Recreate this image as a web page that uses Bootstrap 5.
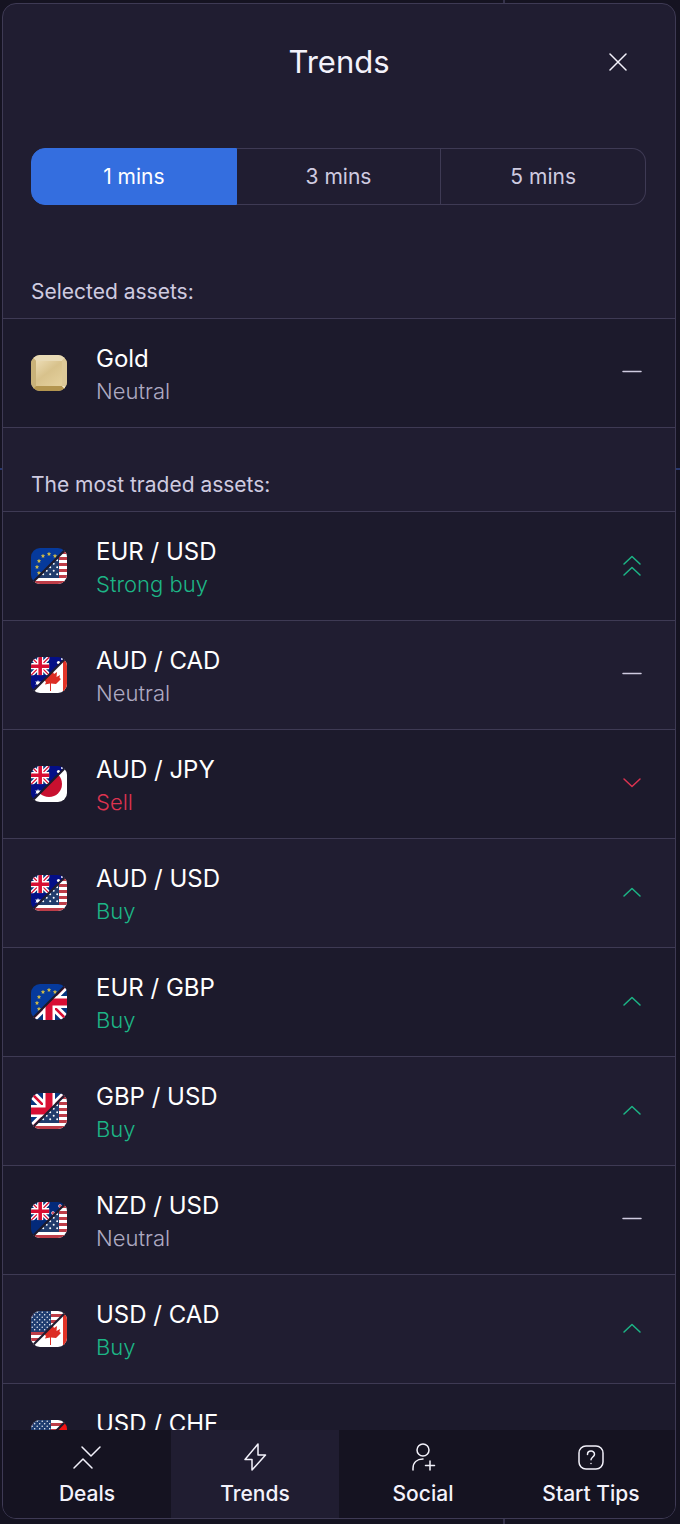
<!DOCTYPE html>
<html lang="en">
<head>
<meta charset="utf-8">
<meta name="viewport" content="width=device-width, initial-scale=1">
<title>Trends</title>
<link href="https://cdn.jsdelivr.net/npm/bootstrap@5.3.0/dist/css/bootstrap.min.css" rel="stylesheet">
<style>
  :root { --line: #3e3a54; --panel: #201d31; --row: #1c1a2c; --text: #f3f2fb; --soft: #cfcbe0; --mute: #aeaac2; --up: #1cb586; --down: #dc3350; }
  body { background: linear-gradient(#35324a, #35324a) 503px 0 / 2px 100% no-repeat, linear-gradient(#28386e, #28386e) 0 468px / 100% 2px no-repeat, #151321; font-family: Inter, "Liberation Sans", sans-serif; color: var(--text); }
  .shell { height: 100vh; padding: 3px 4px 5px 2px; }
  .panel { background: var(--panel); border: 1px solid var(--line); border-radius: 14px; }
  .title-bar { padding: 38px 48px 66px; }
  .title-bar h1 { font-size: 31px; line-height: 40px; font-weight: 400; grid-area: 1 / 1; }
  .close-btn { grid-area: 1 / 1; line-height: 0; color: var(--text); }
  .periods { margin: 0 29px 0 28px; }
  .periods .btn { --bs-btn-color: var(--soft); --bs-btn-border-color: var(--line); --bs-btn-active-bg: #346edf; --bs-btn-active-border-color: #346edf; --bs-btn-active-color: #fff; --bs-btn-hover-color: #fff; --bs-btn-hover-border-color: var(--line); --bs-btn-border-radius: 14px; font-size: 21px; line-height: 31px; padding: 12px 0; flex: 1 1 0; }
  .periods .btn ~ .btn { margin-left: 0 !important; border-left: 0; }
  .section-title { font-size: 21px; line-height: 32px; font-weight: 400; color: var(--soft); padding: 41px 28px 10px; border-bottom: 1px solid var(--line); }
  .first-title { padding-top: 71px; }
  .asset { min-height: 109px; padding: 0 33px 0 28px; border-bottom: 1px solid var(--line); gap: 29px; }
  .asset-list .asset:nth-child(odd) { background: var(--row); --gap: var(--row); }
  .asset-list .asset:nth-child(even) { --gap: var(--panel); }
  .asset-text { min-height: 68px; padding-top: 4px; }
  .asset-name { font-size: 24px; line-height: 32px; color: #fff; }
  .asset-state { font-size: 22px; line-height: 32px; font-weight: 300; }
  .coin { width: 36px; height: 36px; flex: none; }
  .soft { color: var(--soft); } .mute { color: var(--mute); } .up { color: var(--up); } .down { color: var(--down); }
  .tabs { background: #151321; }
  .tabs .nav-link { color: var(--text); padding: 12px 0 8px; font-size: 21px; line-height: 32px; font-weight: 500; height: 88px; }
  .tabs .active { background: var(--panel); }
  .stroke { fill: none; stroke: currentColor; stroke-width: 1.5; stroke-linecap: round; stroke-linejoin: round; }
</style>
</head>
<body>
<svg width="0" height="0" class="position-absolute" aria-hidden="true">
  <defs>
    <clipPath id="round"><rect width="36" height="36" rx="9"/></clipPath>
    <clipPath id="upper"><path d="M0 0H36L0 36Z"/></clipPath>
    <clipPath id="lower"><path d="M36 0V36H0Z"/></clipPath>
    <clipPath id="unionBox"><rect width="36" height="36"/></clipPath>
    <linearGradient id="goldFace" x1="0" y1="0" x2=".8" y2="1"><stop offset="0" stop-color="#ecdcb4"/><stop offset=".5" stop-color="#d8c28c"/><stop offset="1" stop-color="#e3cf9b"/></linearGradient>
    <pattern id="stars" width="5" height="5" patternUnits="userSpaceOnUse"><circle cx="1.2" cy="1.2" r=".7" fill="#fff"/><circle cx="3.7" cy="3.7" r=".7" fill="#fff"/></pattern>
    <pattern id="bigStars" width="7" height="7" patternUnits="userSpaceOnUse"><circle cx="1.700" cy="1.700" r="1" fill="#fff"/><circle cx="5.200" cy="5.200" r="1" fill="#fff"/></pattern>
    <path id="star" d="M0-3 .8-1.2 2.7-1.7 1.7 0 2.7 1.7.8 1.3 0 3-.8 1.3-2.7 1.7-1.7 0-2.7-1.7-.8-1.2Z"/>
    <path id="euStar" d="M0-1.7.5-.5 1.7-.5.7.3 1.1 1.5 0 .8-1.1 1.5-.7.3-1.7-.5-.5-.5Z" fill="#f0cf3c" stroke="#f0cf3c" stroke-width=".4"/>
    <g id="stripes"><path fill="#fff" d="M0 0H36V36H0Z"/><path d="M0 4.500H36M0 10.500H36M0 16.500H36M0 22.500H36M0 28.500H36M0 34.500H36" stroke="#bd3d48" stroke-width="3"/></g>
    <g id="union" clip-path="url(#unionBox)"><path fill="#06357e" d="M0 0H36V36H0Z"/><path d="M0 0 36 36M36 0 0 36" stroke="#fff" stroke-width="8"/><path d="M0 0 36 36M36 0 0 36" stroke="#d80e33" stroke-width="2.6"/><path d="M18 0V36M0 18H36" stroke="#fff" stroke-width="12"/><path d="M18 0V36M0 18H36" stroke="#d80e33" stroke-width="7"/></g>
    <g id="eu"><path fill="#063a9c" d="M0 0H36V36H0Z"/><use href="#euStar" x="8" y="25"/><use href="#euStar" x="6" y="19"/><use href="#euStar" x="8" y="13"/><use href="#euStar" x="12" y="8"/><use href="#euStar" x="18" y="6"/><use href="#euStar" x="24" y="8"/></g>
    <g id="au"><path fill="#040f87" d="M0 0H36V36H0Z"/><use href="#union" transform="scale(.51)"/><use href="#star" x="7" y="26" fill="#fff"/><circle cx="27.500" cy="5.500" r="1.600" fill="#fff"/><circle cx="31" cy="2" r="1" fill="#fff"/></g>
    <g id="nz"><path fill="#032a7a" d="M0 0H36V36H0Z"/><use href="#union" transform="scale(.51)"/><g fill="#d5304c" stroke="#fff" stroke-width=".6"><circle cx="29" cy="4" r="1.500"/><circle cx="22" cy="11" r="1.500"/></g></g>
    <g id="gb"><use href="#union"/></g>
    <g id="us"><use href="#stripes"/><path fill="#1f3d70" d="M0 0H20V21H0Z"/><path fill="url(#stars)" d="M0 0H20V20H0Z"/></g>
    <g id="usLow"><use href="#stripes"/><path fill="#213c6c" d="M0 0H28V30H0Z"/><path fill="url(#bigStars)" d="M0 0H27V28H0Z"/></g>
    <g id="ca"><path fill="#fff" d="M0 0H36V36H0Z"/><path fill="#e23428" d="M32 0H36V36H32Z"/><path fill="#dc2d24" d="M21 13 23 17 26 15 25.500 20 29 18 28.500 21 30 22 25 27 20 26.500V34H19V26.500L14 27.500 15 25 10 20 13 19.500 12 17 16 18 16 15 19 17Z"/></g>
    <g id="jp"><path fill="#fff" d="M0 0H36V36H0Z"/><circle cx="18" cy="18" r="13" fill="#c8102f"/></g>
    <g id="ch"><path fill="#f31414" d="M0 0H36V36H0Z"/><path stroke="#fff" stroke-width="6" d="M18 8V28M8 18H28"/></g>
    <path id="cut" d="M-1 37 37-1" stroke="var(--gap)" stroke-width="2.200"/>
    <g id="flat"><path d="M1 9.500H19" class="stroke"/></g>
    <g id="rise"><path d="M2 14 10 6.500 18 14" class="stroke"/></g>
    <g id="fall"><path d="M2 6 10 13.500 18 6" class="stroke"/></g>
    <g id="surge"><path d="M2 9 10 1.500 18 9M2 20 10 12.500 18 20" class="stroke"/></g>
  </defs>
</svg>

<div class="shell">
<div class="panel d-flex flex-column h-100 overflow-hidden">
  <header class="title-bar d-grid align-items-center">
    <h1 class="m-0 text-center">Trends</h1>
    <button type="button" class="close-btn btn p-0 border-0 ms-auto" aria-label="Close"><svg width="18" height="18" viewBox="0 0 18 18" class="stroke"><path d="M1 1 17 17M17 1 1 17"/></svg></button>
  </header>

  <div class="periods btn-group" role="group" aria-label="Period">
    <input type="radio" class="btn-check" name="period" id="m1" checked><label class="btn" for="m1">1 mins</label>
    <input type="radio" class="btn-check" name="period" id="m3"><label class="btn" for="m3">3 mins</label>
    <input type="radio" class="btn-check" name="period" id="m5"><label class="btn" for="m5">5 mins</label>
  </div>

  <main class="flex-fill overflow-hidden">
    <h2 class="section-title first-title m-0">Selected assets:</h2>
    <ul class="asset-list list-unstyled m-0">
      <li class="asset d-flex align-items-center">
        <svg class="coin" viewBox="0 0 36 36"><g clip-path="url(#round)"><path fill="#d7c28d" d="M0 0H36V36H0Z"/><path fill="#e8dab6" d="M0 0H36L31 6H5Z"/><path fill="#c9b279" d="M0 0 5 6V31L0 36Z"/><path fill="#b3954f" d="M0 36 5 31H31L36 36Z"/><path fill="#ddc998" d="M36 0V36L31 31V6Z"/><path fill="url(#goldFace)" d="M5 6H31V31H5Z"/><path fill="#f4e8c6" d="M31 31H33L36 33V36Z"/></g></svg>
        <div class="asset-text flex-fill"><div class="asset-name">Gold</div><div class="asset-state mute">Neutral</div></div>
        <svg class="soft" width="20" height="22"><use href="#flat"/></svg>
      </li>
    </ul>

    <h2 class="section-title m-0">The most traded assets:</h2>
    <ul class="asset-list list-unstyled m-0">
      <li class="asset d-flex align-items-center">
        <svg class="coin" viewBox="0 0 36 36"><g clip-path="url(#round)"><use href="#eu" clip-path="url(#upper)"/><use href="#usLow" clip-path="url(#lower)"/><use href="#cut"/></g></svg>
        <div class="asset-text flex-fill"><div class="asset-name">EUR / USD</div><div class="asset-state up">Strong buy</div></div>
        <svg class="up" width="20" height="22"><use href="#surge"/></svg>
      </li>
      <li class="asset d-flex align-items-center">
        <svg class="coin" viewBox="0 0 36 36"><g clip-path="url(#round)"><use href="#au" clip-path="url(#upper)"/><use href="#ca" clip-path="url(#lower)"/><use href="#cut"/></g></svg>
        <div class="asset-text flex-fill"><div class="asset-name">AUD / CAD</div><div class="asset-state mute">Neutral</div></div>
        <svg class="soft" width="20" height="22"><use href="#flat"/></svg>
      </li>
      <li class="asset d-flex align-items-center">
        <svg class="coin" viewBox="0 0 36 36"><g clip-path="url(#round)"><use href="#au" clip-path="url(#upper)"/><use href="#jp" clip-path="url(#lower)"/><use href="#cut"/></g></svg>
        <div class="asset-text flex-fill"><div class="asset-name">AUD / JPY</div><div class="asset-state down">Sell</div></div>
        <svg class="down" width="20" height="22"><use href="#fall"/></svg>
      </li>
      <li class="asset d-flex align-items-center">
        <svg class="coin" viewBox="0 0 36 36"><g clip-path="url(#round)"><use href="#au" clip-path="url(#upper)"/><use href="#usLow" clip-path="url(#lower)"/><use href="#cut"/></g></svg>
        <div class="asset-text flex-fill"><div class="asset-name">AUD / USD</div><div class="asset-state up">Buy</div></div>
        <svg class="up" width="20" height="22"><use href="#rise"/></svg>
      </li>
      <li class="asset d-flex align-items-center">
        <svg class="coin" viewBox="0 0 36 36"><g clip-path="url(#round)"><use href="#eu" clip-path="url(#upper)"/><use href="#gb" clip-path="url(#lower)"/><use href="#cut"/></g></svg>
        <div class="asset-text flex-fill"><div class="asset-name">EUR / GBP</div><div class="asset-state up">Buy</div></div>
        <svg class="up" width="20" height="22"><use href="#rise"/></svg>
      </li>
      <li class="asset d-flex align-items-center">
        <svg class="coin" viewBox="0 0 36 36"><g clip-path="url(#round)"><use href="#gb" clip-path="url(#upper)"/><use href="#usLow" clip-path="url(#lower)"/><use href="#cut"/></g></svg>
        <div class="asset-text flex-fill"><div class="asset-name">GBP / USD</div><div class="asset-state up">Buy</div></div>
        <svg class="up" width="20" height="22"><use href="#rise"/></svg>
      </li>
      <li class="asset d-flex align-items-center">
        <svg class="coin" viewBox="0 0 36 36"><g clip-path="url(#round)"><use href="#nz" clip-path="url(#upper)"/><use href="#usLow" clip-path="url(#lower)"/><use href="#cut"/></g></svg>
        <div class="asset-text flex-fill"><div class="asset-name">NZD / USD</div><div class="asset-state mute">Neutral</div></div>
        <svg class="soft" width="20" height="22"><use href="#flat"/></svg>
      </li>
      <li class="asset d-flex align-items-center">
        <svg class="coin" viewBox="0 0 36 36"><g clip-path="url(#round)"><use href="#us" clip-path="url(#upper)"/><use href="#ca" clip-path="url(#lower)"/><use href="#cut"/></g></svg>
        <div class="asset-text flex-fill"><div class="asset-name">USD / CAD</div><div class="asset-state up">Buy</div></div>
        <svg class="up" width="20" height="22"><use href="#rise"/></svg>
      </li>
      <li class="asset d-flex align-items-center">
        <svg class="coin" viewBox="0 0 36 36"><g clip-path="url(#round)"><use href="#us" clip-path="url(#upper)"/><use href="#ch" clip-path="url(#lower)"/><use href="#cut"/></g></svg>
        <div class="asset-text flex-fill"><div class="asset-name">USD / CHF</div></div>
      </li>
    </ul>
  </main>

  <nav class="tabs nav nav-fill nav-justified flex-nowrap" aria-label="Sections">
    <a class="nav-link d-flex flex-column align-items-center justify-content-between" href="#"><svg class="stroke" width="30" height="30" viewBox="0 0 30 30"><path d="M10 5 19 14 28 5M2 26 11 17 20 26"/></svg>Deals</a>
    <a class="nav-link active d-flex flex-column align-items-center justify-content-between" href="#" aria-current="page"><svg class="stroke" width="30" height="30" viewBox="0 0 30 30"><path d="M18 2 5 17.500H12V28L25.500 13H18Z"/></svg>Trends</a>
    <a class="nav-link d-flex flex-column align-items-center justify-content-between" href="#"><svg class="stroke" width="30" height="30" viewBox="0 0 30 30"><circle cx="15" cy="8" r="6"/><path d="M5 28V26.500C5 20.500 9 17 15 17M17.500 23.500H26.500M22 19V28"/></svg>Social</a>
    <a class="nav-link d-flex flex-column align-items-center justify-content-between" href="#"><svg class="stroke" width="30" height="30" viewBox="0 0 30 30"><rect x="3" y="4" width="24" height="23" rx="7"/><path d="M11.500 12.500C11.500 8 18.500 8 18.500 12.300 18.500 15 15 15 15 17.800M15 21.500V21.600"/></svg>Start Tips</a>
  </nav>
</div>
</div>
<script src="https://cdn.jsdelivr.net/npm/bootstrap@5.3.0/dist/js/bootstrap.bundle.min.js"></script>
</body>
</html>
